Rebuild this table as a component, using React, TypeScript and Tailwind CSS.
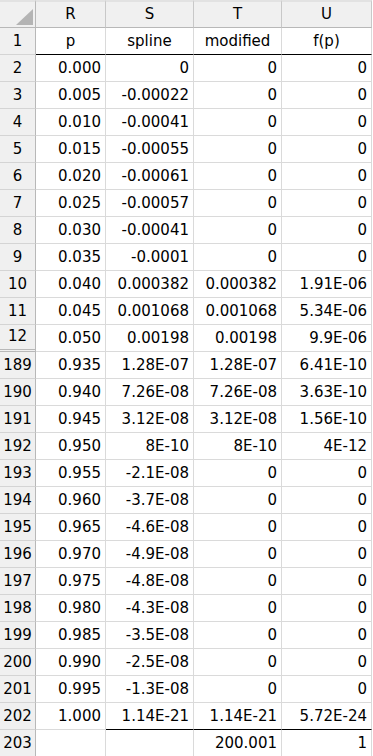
import React from "react";

const rows: [string, string, string, string, string][] = [
  ["2", "0.000", "0", "0", "0"],
  ["3", "0.005", "-0.00022", "0", "0"],
  ["4", "0.010", "-0.00041", "0", "0"],
  ["5", "0.015", "-0.00055", "0", "0"],
  ["6", "0.020", "-0.00061", "0", "0"],
  ["7", "0.025", "-0.00057", "0", "0"],
  ["8", "0.030", "-0.00041", "0", "0"],
  ["9", "0.035", "-0.0001", "0", "0"],
  ["10", "0.040", "0.000382", "0.000382", "1.91E-06"],
  ["11", "0.045", "0.001068", "0.001068", "5.34E-06"],
  ["12", "0.050", "0.00198", "0.00198", "9.9E-06"],
  ["189", "0.935", "1.28E-07", "1.28E-07", "6.41E-10"],
  ["190", "0.940", "7.26E-08", "7.26E-08", "3.63E-10"],
  ["191", "0.945", "3.12E-08", "3.12E-08", "1.56E-10"],
  ["192", "0.950", "8E-10", "8E-10", "4E-12"],
  ["193", "0.955", "-2.1E-08", "0", "0"],
  ["194", "0.960", "-3.7E-08", "0", "0"],
  ["195", "0.965", "-4.6E-08", "0", "0"],
  ["196", "0.970", "-4.9E-08", "0", "0"],
  ["197", "0.975", "-4.8E-08", "0", "0"],
  ["198", "0.980", "-4.3E-08", "0", "0"],
  ["199", "0.985", "-3.5E-08", "0", "0"],
  ["200", "0.990", "-2.5E-08", "0", "0"],
  ["201", "0.995", "-1.3E-08", "0", "0"],
  ["202", "1.000", "1.14E-21", "1.14E-21", "5.72E-24"],
];

const font = { fontFamily: '"DejaVu Sans", sans-serif' };

function RowHead({ n, hidden }: { n: string; hidden?: boolean }) {
  return (
    <div
      className={
        "h-[27px] bg-[#f0f0f0] border-r border-[#b8b8b8] flex items-end justify-center pb-[2px] text-[15px] text-black " +
        (hidden ? "border-b-[3px] border-b-[#b8b8b8] border-double" : "border-b border-b-[#d4d4d4]")
      }
    >
      {n}
    </div>
  );
}

function Cell({ v, extra }: { v: string; extra?: string }) {
  return (
    <div
      className={
        "h-[27px] border-r border-[#dadada] flex items-end justify-end pr-[4px] pb-[2px] text-[15px] text-black " +
        (extra ?? "border-b border-b-[#dadada]")
      }
    >
      {v}
    </div>
  );
}

export default function App() {
  return (
    <div className="w-[373px] h-[756px] overflow-hidden bg-white" style={font}>
      <div className="grid grid-cols-[36px_70px_88px_88px_90px] w-[372px] border-r border-[#c8c8c8]">
        {/* header row */}
        <div className="h-[28px] bg-[#f0f0f0] border-r border-b border-[#b8b8b8] border-t-2 border-t-[#e2e2e2] relative">
          <svg width="36" height="28" className="absolute left-0 top-[-2px]">
            <polygon points="33,9 33,25 16,25" fill="#b4b4b4" />
          </svg>
        </div>
        {["R", "S", "T", "U"].map((c) => (
          <div
            key={c}
            className="h-[28px] bg-[#f0f0f0] border-r border-b border-[#c8c8c8] border-b-[#b8b8b8] border-t-2 border-t-[#e2e2e2] flex items-center justify-center text-[15px] text-black"
          >
            {c}
          </div>
        ))}
        {/* row 1 */}
        <RowHead n="1" />
        {["p", "spline", "modified", "f(p)"].map((h) => (
          <div
            key={h}
            className="h-[27px] border-r border-[#dadada] border-b border-b-black flex items-end justify-center pb-[2px] text-[15px] text-black"
          >
            {h}
          </div>
        ))}
        {rows.map((r) => {
          const last = r[0] === "202";
          const blackB = "border-b border-b-black";
          return (
            <React.Fragment key={r[0]}>
              <RowHead n={r[0]} hidden={r[0] === "12"} />
              <Cell v={r[1]} />
              <Cell v={r[2]} extra={last ? blackB : undefined} />
              <Cell v={r[3]} extra={last ? blackB : undefined} />
              <Cell v={r[4]} extra={last ? blackB : undefined} />
            </React.Fragment>
          );
        })}
        <RowHead n="203" />
        <Cell v="" />
        <Cell v="" />
        <Cell v="200.001" />
        <Cell v="1" />
      </div>
    </div>
  );
}
